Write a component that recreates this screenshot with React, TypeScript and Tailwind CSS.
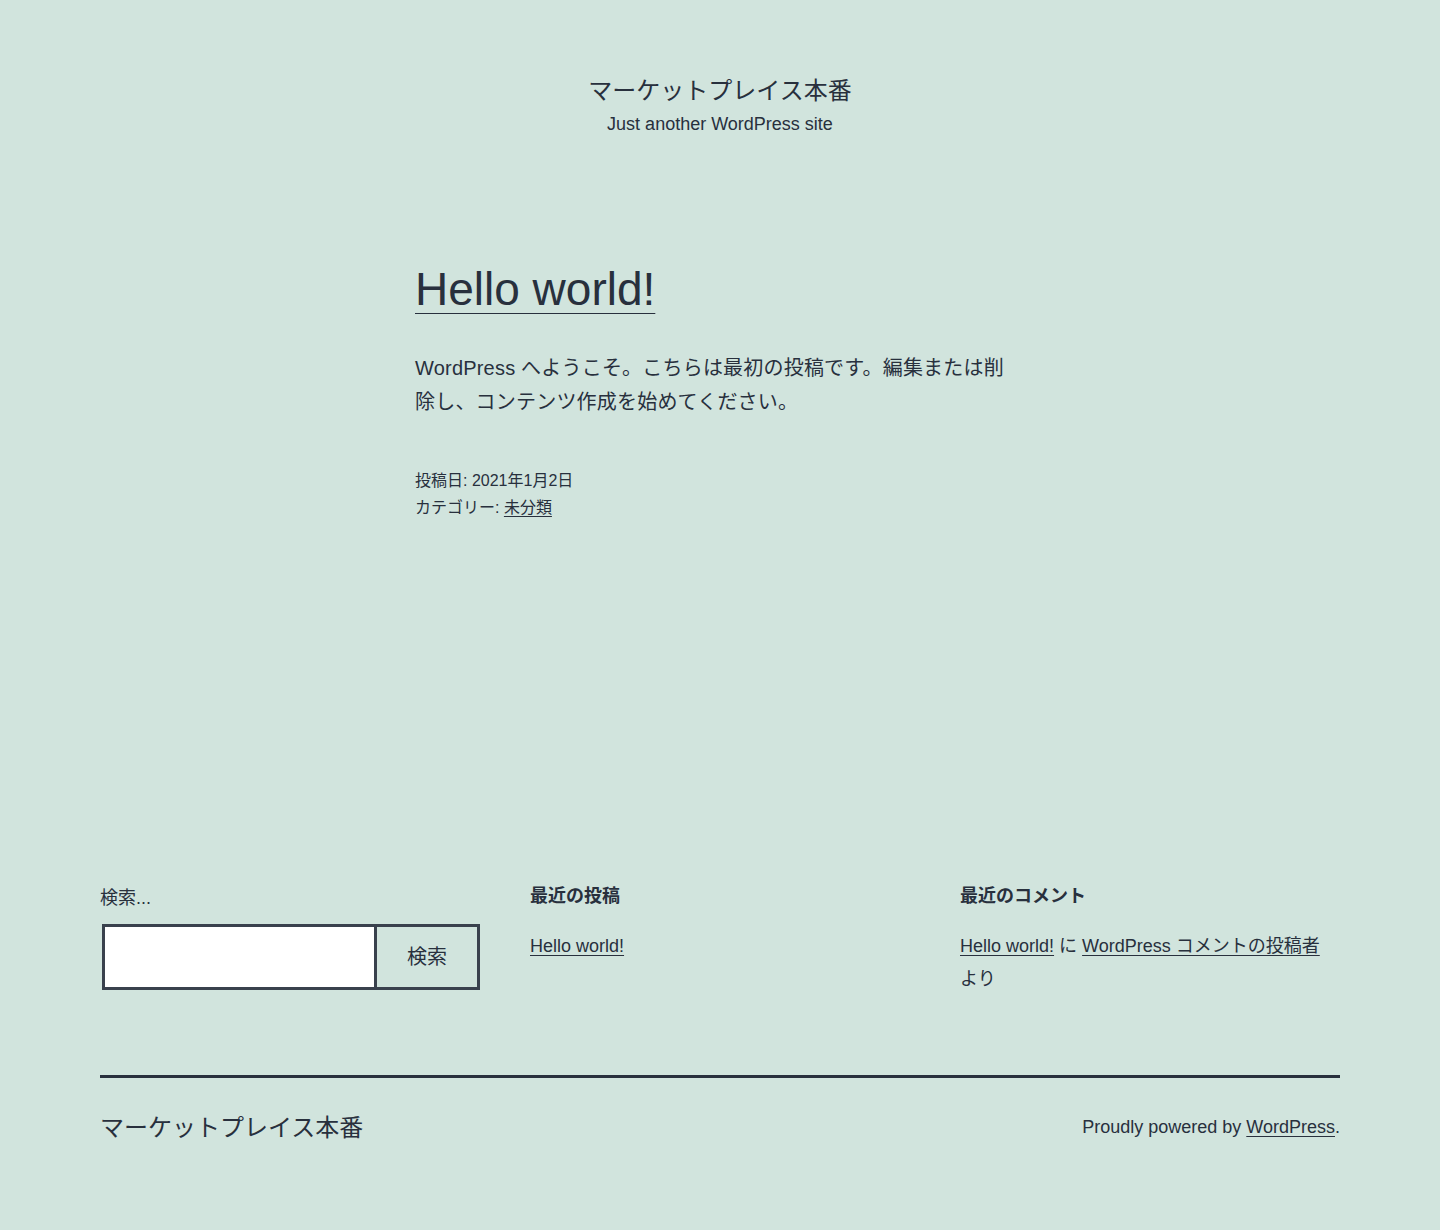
const font = "font-['Liberation_Sans','Noto_Sans_CJK_JP',sans-serif]";

function SearchWidget() {
  return (
    <form className="flex flex-col" onSubmit={(e) => e.preventDefault()}>
      <label htmlFor="s" className="text-[18px] leading-[30px]">
        検索...
      </label>
      <div className="flex mt-[11px] ml-[2px] w-[378px]">
        <input
          id="s"
          type="search"
          className="flex-1 min-w-0 h-[66px] bg-white border-[3px] border-[#39414d] outline-none px-3"
        />
        <button
          type="submit"
          className="w-[103px] h-[66px] border-[3px] border-l-0 border-[#39414d] text-[20px] text-[#28303d] bg-transparent"
        >
          検索
        </button>
      </div>
    </form>
  );
}

function RecentPosts() {
  return (
    <div>
      <h2 className="text-[18px] leading-[27px] font-bold">最近の投稿</h2>
      <ul className="mt-[20px]">
        <li className="text-[18px] leading-[33px]">
          <a href="#" className="underline decoration-1 underline-offset-[3px]">
            Hello world!
          </a>
        </li>
      </ul>
    </div>
  );
}

function RecentComments() {
  return (
    <div>
      <h2 className="text-[18px] leading-[27px] font-bold">最近のコメント</h2>
      <ul className="mt-[20px]">
        <li className="text-[18px] leading-[33px]">
          <a href="#" className="underline decoration-1 underline-offset-[3px]">
            Hello world!
          </a>{' '}
          に{' '}
          <a href="#" className="underline decoration-1 underline-offset-[3px]">
            WordPress コメントの投稿者
          </a>{' '}
          より
        </li>
      </ul>
    </div>
  );
}

export default function App() {
  return (
    <div className={`min-h-screen bg-[#d1e4dd] text-[#28303d] ${font}`}>
      {/* Site header */}
      <header className="flex flex-col items-center pt-[75px]">
        <p className="text-[24px] leading-[31px]">マーケットプレイス本番</p>
        <p className="text-[18px] leading-[27px] mt-[5px]">Just another WordPress site</p>
      </header>

      {/* Post */}
      <main className="w-[610px] mx-auto mt-[120px]">
        <article>
          <h1 className="text-[46px] leading-[62px] font-normal">
            <a href="#" className="underline decoration-1 underline-offset-[8px]">
              Hello world!
            </a>
          </h1>
          <p className="text-[20px] leading-[34px] mt-[31px] tracking-[0.2px]">
            WordPress へようこそ。こちらは最初の投稿です。編集または削
            <br />
            除し、コンテンツ作成を始めてください。
          </p>
          <footer className="text-[16px] leading-[27px] mt-[48px]">
            <div>投稿日: 2021年1月2日</div>
            <div>
              カテゴリー:{' '}
              <a href="#" className="underline decoration-1 underline-offset-[3px]">
                未分類
              </a>
            </div>
          </footer>
        </article>
      </main>

      {/* Widgets */}
      <aside className="mx-[100px] mt-[362px] grid grid-cols-3 gap-[50px]">
        <SearchWidget />
        <RecentPosts />
        <RecentComments />
      </aside>

      {/* Site footer */}
      <footer className="mx-[100px] mt-[79px] border-t-[3px] border-[#28303d] pt-[34px] pb-[88px] flex items-center justify-between">
        <p className="text-[24px] leading-[31px]">マーケットプレイス本番</p>
        <p className="text-[18px] leading-[27px]">
          Proudly powered by{' '}
          <a href="#" className="underline decoration-1 underline-offset-[3px]">
            WordPress
          </a>
          .
        </p>
      </footer>
    </div>
  );
}
